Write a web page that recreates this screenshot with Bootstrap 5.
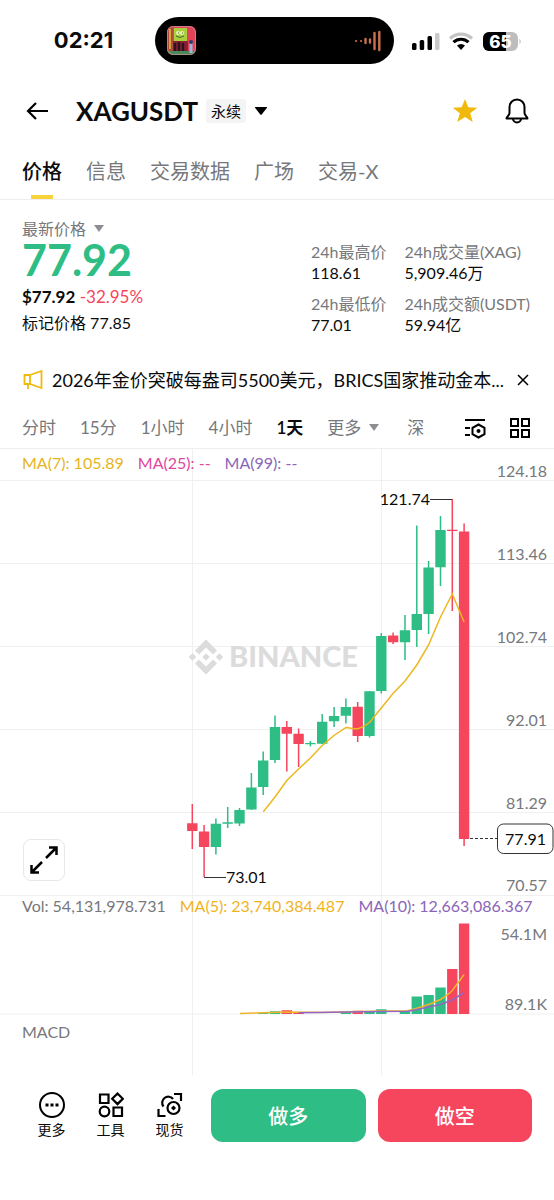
<!DOCTYPE html>
<html lang="zh-CN">
<head>
<meta charset="utf-8">
<meta name="viewport" content="width=device-width, initial-scale=1">
<title>XAGUSDT 永续</title>
<link href="https://cdn.jsdelivr.net/npm/bootstrap@5.3.0/dist/css/bootstrap.min.css" rel="stylesheet">
<style>
  :root { --up: #2ebd85; --down: #f6465d; --muted: #76787c; --gold: #f0b90b; --edge: 22px; }
  body { font-family: Lato, "Noto Sans CJK SC", sans-serif; font-size: 16px; line-height: 22px; color: #0b0b0c; background: #fff; }
  button { color: inherit; }
  .btn-bare { background: none; border: 0; padding: 0; display: flex; align-items: center; color: inherit; }
  svg { display: block; flex: none; }
  .edge { padding-left: var(--edge); padding-right: var(--edge); }
  .tone-muted { color: var(--muted); }
  .tone-up { color: var(--up); }
  .tone-down { color: var(--down); }

  .status-bar { display: grid; grid-template-columns: 155fr 239fr 160fr; height: 80px; padding-top: 17px; }
  .status-bar > * { height: 47px; }
  .clock { font: 700 22px/47px Inter, sans-serif; padding-left: 12px; }
  .island { background: #000; border-radius: 24px; padding: 0 12px; }
  .signals { padding-left: 18px; }

  .page-head { height: 62px; }
  .pair { font-size: 26px; line-height: 32px; font-weight: 700; margin: 0 8px 0 28px; }
  .kind { font-size: 15px; line-height: 24px; background: #f4f4f5; border-radius: 3px; padding: 0 5px; }

  .tabs { gap: 24px; height: 58px; border-bottom: 1px solid #eee; }
  .tabs a { position: relative; display: flex; align-items: center; font-size: 20px; color: var(--muted); text-decoration: none; }
  .tabs a.active { color: #0b0b0c; font-weight: 500; }
  .tabs a.active::after { content: ""; position: absolute; left: 9px; right: 9px; bottom: 0; height: 4px; background: #f8d33a; }

  .summary { padding-top: 18px; height: 152px; }
  .last-price { font-size: 43px; line-height: 40px; font-weight: 700; margin-bottom: 4px; }
  .sub-line { line-height: 26px; }
  .usd-line { font-size: 17px; }
  .stats { display: grid; grid-template-columns: auto auto; gap: 10px 18px; padding-top: 23px; line-height: 21px; }
  .stats dt, .stats dd { font-weight: 400; margin: 0; line-height: 21px; }
  .stats dl, .stats { padding-right: 2px; }

  .notice { height: 56px; font-size: 18px; gap: 8px; }
  .notice a { color: inherit; text-decoration: none; }
  .frames { gap: 24px; height: 41px; font-size: 17px; color: var(--muted); border-bottom: 1px solid #eee; }
  .frames .active { color: #0b0b0c; font-weight: 600; }

  .pane { position: relative; }
  .pane svg.plot { width: 100%; height: auto; }
  .legend-row { position: absolute; top: 0; left: var(--edge); right: 0; display: flex; gap: 14px; line-height: 20px; white-space: nowrap; }
  .legend-price { top: 4px; }
  .legend-macd { top: 7px; }
  .expand { position: absolute; left: 23px; bottom: 15px; width: 42px; height: 42px; justify-content: center; background: #fff; border: 1px solid #e8e8ea; border-radius: 8px; }
  .grid-line { stroke: #f0f0f1; stroke-width: 1; fill: none; }
  .wick { stroke-width: 1.5; fill: none; }
  .candle { stroke-width: 10.4; fill: none; }
  .g { stroke: var(--up); }
  .r { stroke: var(--down); }
  .axis { font-size: 16px; fill: var(--muted); text-anchor: end; }

  .action-bar { padding-top: 14px; padding-bottom: 58px; }
  .tool { width: 59px; flex-direction: column; gap: 2px; font-size: 14px; line-height: 20px; padding-top: 3px; }
  .trade { height: 53px; border: 0; border-radius: 12px; color: #fff; font-size: 20px; font-weight: 500; }
  .long { background: var(--up); }
  .short { background: var(--down); }
</style>
</head>
<body>

<div class="status-bar">
  <div class="clock text-center">02:21</div>
  <div class="island d-flex align-items-center justify-content-between">
    <svg width="29" height="29" viewBox="0 0 29 29">
      <defs><clipPath id="art"><rect width="29" height="29" rx="6"/></clipPath></defs>
      <g clip-path="url(#art)">
        <rect width="29" height="29" fill="#e0435a"/><rect width="6" height="26" fill="#b04a3c"/><path d="M3 3v20" stroke="#d8a03a" stroke-width="2"/>
        <rect x="7" y="2" width="13" height="13" fill="#a9cf3d"/><circle cx="11" cy="7" r="2" fill="#e6f2b0"/><circle cx="15" cy="7" r="2" fill="#e6f2b0"/><path d="M9 10q4 3 8 0M11 7h1M15 7h1" stroke="#3d6b2c" fill="none"/>
        <path d="M6 15h15v10H6z" fill="#8c1f33"/><path d="M8 17v8M12 16v9M16 17v8" stroke="#2b1420" stroke-width="2.5"/>
        <path d="M0 25h29v4H0z" fill="#4a8a58"/><path d="M24 15v12" stroke="#9fb6d8" stroke-width="3"/><circle cx="24" cy="16" r="2" fill="#333a66"/>
      </g>
      <rect x=".5" y=".5" width="28" height="28" rx="6" fill="none" stroke="#c9989c" stroke-opacity=".7"/>
    </svg>
    <svg width="28" height="22" viewBox="0 0 28 22" stroke="#c9714f" stroke-width="2.4" stroke-linecap="round"><path d="M2 11h.1M7 11h.1" stroke-width="2"/><path d="M11.500 9v4M16 9.500v3M20.500 3v16M25.300 2v18"/></svg>
  </div>
  <div class="signals d-flex align-items-center">
    <svg width="110" height="22" viewBox="0 0 110 22">
      <rect x="0" y="13" width="4.500" height="7" rx="1.500"/><rect x="7.700" y="10" width="4.500" height="10" rx="1.500"/><rect x="15.500" y="6" width="4.500" height="14" rx="1.500"/><rect x="23" y="3" width="4.500" height="17" rx="1.500" fill="#c9c9cb"/>
      <path d="M38 8.500a16 16 0 0 1 22 0" fill="none" stroke="#c4c4c6" stroke-width="3.200"/><path d="M41.500 12.200a11 11 0 0 1 15 0" fill="none" stroke="#000" stroke-width="3.200"/><path d="M45 15.500a6 6 0 0 1 8 0L49 20z"/>
      <rect x="71" y="2" width="35" height="19" rx="6" fill="#bdbdbf"/><path d="M77 2h17v19H77a6 6 0 0 1-6-6V8a6 6 0 0 1 6-6z"/><path d="M107.500 8.500v6q2.500-3 0-6z" fill="#bdbdbf"/>
      <text x="88.500" y="17.500" text-anchor="middle" font-family="Inter, sans-serif" font-weight="800" font-size="17" fill="#fff">65</text>
    </svg>
  </div>
</div>

<header class="page-head edge d-flex align-items-center">
  <button class="btn-bare ps-1" aria-label="返回"><svg width="22" height="20" viewBox="0 0 22 20" fill="none" stroke="#000" stroke-width="2.200"><path d="M22 10H2M10 2L2 10l8 8"/></svg></button>
  <h1 class="pair">XAGUSDT</h1>
  <span class="kind">永续</span>
  <button class="btn-bare ms-2" aria-label="切换合约"><svg width="14" height="10" viewBox="0 0 14 10"><path d="M1.500 1h11q1 0 .3 1L7.700 8.500q-.7.800-1.400 0L1.200 2q-.7-1 .3-1z"/></svg></button>
  <button class="btn-bare ms-auto" aria-label="收藏"><svg width="28" height="26" viewBox="0 0 28 26"><path d="M13 1l3.300 8.300 8.900.4-7 5.500 2.500 8.800-7.700-5-7.700 5 2.500-8.800-7-5.500 8.900-.4z" fill="#f0b90b"/></svg></button>
  <button class="btn-bare ms-4" aria-label="提醒"><svg width="28" height="28" viewBox="1 0 28 28" fill="none" stroke="#000" stroke-width="2"><path d="M14 2.500c-4.500 0-7.500 3.300-7.500 7.700V16c0 2-2.700 3.800-3 5.500h21c-.3-1.700-3-3.500-3-5.500v-5.800c0-4.400-3-7.700-7.500-7.700z" stroke-linejoin="round"/><path d="M10 21.500a4 4 0 0 0 8 0"/></svg></button>
</header>

<nav class="tabs edge d-flex">
  <a href="#" class="active">价格</a><a href="#">信息</a><a href="#">交易数据</a><a href="#">广场</a><a href="#">交易-X</a>
</nav>

<section class="summary edge d-flex justify-content-between">
  <div>
    <button class="btn-bare tone-muted gap-2">最新价格 <svg width="10" height="8" viewBox="0 0 10 8"><path d="M0 0h10L5 7z" fill="#8c8e92"/></svg></button>
    <div class="last-price tone-up">77.92</div>
    <div class="sub-line usd-line"><b>$77.92</b> <span class="tone-down">-32.95%</span></div>
    <div class="sub-line">标记价格 77.85</div>
  </div>
  <dl class="stats m-0 align-content-start">
    <div><dt class="tone-muted">24h最高价</dt><dd>118.61</dd></div>
    <div><dt class="tone-muted">24h成交量(XAG)</dt><dd>5,909.46万</dd></div>
    <div><dt class="tone-muted">24h最低价</dt><dd>77.01</dd></div>
    <div><dt class="tone-muted">24h成交额(USDT)</dt><dd>59.94亿</dd></div>
  </dl>
</section>

<div class="notice edge d-flex align-items-center">
  <svg width="22" height="22" viewBox="0 0 22 22" fill="none" stroke="#f0b90b" stroke-width="1.800"><path d="M8 6L19.500 2v17L8 15M8 6H2.500v9H8zM6 15v5"/></svg>
  <a href="#" class="text-truncate">2026年金价突破每盎司5500美元，BRICS国家推动金本...</a>
  <button class="btn-bare ms-auto" aria-label="关闭"><svg width="15" height="12" viewBox="0 0 15 12" stroke="#000" stroke-width="1.500"><path d="M1 1l10 10M11 1L1 11"/></svg></button>
</div>

<div class="frames edge d-flex align-items-center text-nowrap">
  <button class="btn-bare">分时</button><button class="btn-bare">15分</button><button class="btn-bare">1小时</button><button class="btn-bare">4小时</button><button class="btn-bare active">1天</button>
  <button class="btn-bare gap-2">更多 <svg width="10" height="8" viewBox="0 0 10 8"><path d="M0 0h10L5 7z" fill="#8c8e92"/></svg></button>
  <button class="btn-bare ms-1">深</button>
  <button class="btn-bare ms-auto" aria-label="指标设置"><svg width="22" height="22" viewBox="0 0 22 22" fill="none" stroke="#000" stroke-width="2"><path d="M1 3h20M1 11h5M1 18h5"/><path d="M14.500 7.500l6 3.300v6.400l-6 3.300-6-3.300v-6.400z"/><circle cx="14.500" cy="14" r="2" fill="#000" stroke="none"/></svg></button>
  <button class="btn-bare" aria-label="布局"><svg width="22" height="22" viewBox="1 0 22 22" fill="none" stroke="#000" stroke-width="2"><path d="M2 2h7v7H2zM13 2h7v7h-7zM2 13h7v7H2zM13 13h7v7h-7z"/></svg></button>
</div>

<main>
  <div class="pane">
    <svg class="plot" viewBox="0 449 554 447">
      <path class="grid-line" d="M0 480.500H554M0 563.500H554M0 646.500H554M0 729.500H554M0 812.500H554M0 895.500H554M192.500 449V896M381.500 449V896"/>
      <g fill="#dcdcdd">
        <path d="M206 639.500l11 11-4 4-7-7-7 7-4-4zM206 674.500l11-11-4-4-7 7-7-7-4 4zM206 653.300l3.700 3.700-3.700 3.700-3.700-3.700zM192.500 653.300l3.700 3.700-3.700 3.700-3.700-3.700zM219.500 653.300l3.700 3.700-3.700 3.700-3.700-3.700z"/>
        <text x="229" y="667" font-size="29" font-weight="900">BINANCE</text>
      </g>
      <path class="wick r" d="M192.300 804V849M204.100 825V877M286.800 721V771.500M298.600 728.500V767M357.700 702V742M393.100 632.500V644M452.300 499V611M464.100 523.500V846"/>
      <path class="wick g" d="M215.900 818.500V854.500M227.700 807V828M239.500 808V826M251.400 773V810M263.200 751.500V795M275 715.500V763M310.400 741V746.500M322.200 714V744M334.100 707V727M345.900 698.500V723.500M369.500 691V737.500M381.300 633V693.500M405 615V660M416.800 525.500V647M428.600 561V634M440.500 516V586"/>
      <path class="candle r" d="M192.300 823.300V831M204.100 831.500V847M286.800 727V733.700M298.600 733.700V744M357.700 706.700V736M393.100 635.500V642.300M452.300 529.700V531M464.100 531.500V839"/>
      <path class="candle g" d="M215.900 823.700V847M227.700 822.300V823.700M239.500 810V823.500M251.400 787.500V809.500M263.200 760.500V787M275 727V760M310.400 743V744.300M322.200 721.700V743.700M334.100 716V721.300M345.900 707V715.700M369.500 691.300V736M381.300 636V691M405 630.300V642.300M416.800 614V630M428.600 567.500V614M440.500 530V567.300"/>
      <path d="M263.300 811.700L275 797L286.800 780.500L298.600 769L310.400 758L322.200 745.500L334 735.500L346 727.500C350 727.500 354 729.500 357.700 728.700C362 727.500 366 725.500 369.500 722.500L381.300 708L393 693.500L405 681L416.800 665L428.600 645L440.500 617L452.300 594L464.100 622" fill="none" stroke="#edb71f" stroke-width="1.500"/>
      <path d="M430 499.500H452M204 877.500H226" stroke="#333" fill="none"/>
      <path d="M470 838.500H497" stroke="#333" stroke-dasharray="3 2"/>
      <text x="430" y="505" text-anchor="end" font-size="16" fill="#0b0b0c">121.74</text>
      <text x="226" y="883" font-size="16" fill="#0b0b0c">73.01</text>
      <g class="axis"><text x="547" y="477">124.18</text><text x="547" y="560">113.46</text><text x="547" y="643">102.74</text><text x="547" y="726">92.01</text><text x="547" y="809">81.29</text><text x="547" y="891">70.57</text></g>
      <rect x="497.500" y="824" width="55.500" height="29.500" rx="6" fill="#fff" stroke="#333"/>
      <text x="546" y="845" text-anchor="end" font-size="16" fill="#0b0b0c">77.91</text>
    </svg>
    <div class="legend-row legend-price"><span style="color:#e6b422">MA(7): 105.89</span><span style="color:#e0479e">MA(25): --</span><span style="color:#8a65b8">MA(99): --</span></div>
    <button class="btn-bare expand" aria-label="全屏"><svg width="28" height="28" viewBox="0 0 28 28" fill="none" stroke="#000" stroke-width="2.500"><path d="M16 12L26.500 1.500M19 1.500h7.500V9M12 16L1.500 26.500M1.500 19v7.500H9"/></svg></button>
  </div>

  <div class="pane">
    <svg class="plot" viewBox="0 896 554 119">
      <path class="grid-line" d="M0 1014H554M192.500 896V1015M381.500 896V1015"/>
      <path class="candle r" d="M286.800 1010.300V1014M298.600 1012.300V1014M357.700 1010.700V1014M452.300 969V1014M464.100 923.500V1014"/>
      <path class="candle g" d="M263.200 1013V1014M275 1011.300V1014M345.900 1012.300V1014M369.500 1012V1014M381.300 1009.300V1014M405 1011.500V1014M416.800 996.500V1014M428.600 995V1014M440.500 987.500V1014"/>
      <path d="M240 1013.500L287 1012L322 1012.500L381 1011L405 1011C410 1011 429 1005 440.500 999.500C446 996 450 993 452.300 990.500L464.100 974.500" fill="none" stroke="#f0b42c" stroke-width="1.500"/>
      <path d="M298.600 1012.700L381 1011.500L408 1011.300L417 1009.500L428.600 1007L440.500 1004.500L452.300 1000L464.100 992.500" fill="none" stroke="#9466c4" stroke-width="1.500"/>
      <g class="axis"><text x="547" y="940">54.1M</text><text x="547" y="1010">89.1K</text></g>
    </svg>
    <div class="legend-row"><span class="tone-muted">Vol: 54,131,978.731</span><span style="color:#f0b422">MA(5): 23,740,384.487</span><span style="color:#8a65b8">MA(10): 12,663,086.367</span></div>
  </div>

  <div class="pane">
    <svg class="plot" viewBox="0 1015 554 60"><path class="grid-line" d="M192.500 1015V1075M381.500 1015V1075"/></svg>
    <div class="legend-row legend-macd tone-muted">MACD</div>
  </div>
</main>

<footer class="action-bar edge d-flex">
  <button class="btn-bare tool"><svg width="26" height="26" viewBox="0 0 26 26" fill="none" stroke="#000" stroke-width="2"><circle cx="13" cy="13" r="12"/><path d="M6.500 13h3M11.500 13h3M16.500 13h3" stroke-width="3"/></svg>更多</button>
  <button class="btn-bare tool"><svg width="26" height="26" viewBox="0 0 26 26" fill="none" stroke="#000" stroke-width="2.200"><path d="M2 2.500h8.500V11H2zM15.500 15.500H24V24h-8.500zM19.500 1.500l5.300 5.300-5.300 5.300-5.300-5.300z"/><circle cx="6.500" cy="19.500" r="4.800"/></svg>工具</button>
  <button class="btn-bare tool"><svg width="26" height="26" viewBox="0 0 26 26" fill="none" stroke="#000" stroke-width="2.200"><path d="M17 2h7v7M1.500 17v7h7M6.500 14.500a6 6 0 1 1 9.500-7.500"/><circle cx="16.500" cy="16" r="6"/><path d="M16.500 13.500l2.500 2.500-2.500 2.500-2.500-2.500z" fill="#000" stroke="none"/></svg>现货</button>
  <div class="row flex-grow-1 g-0 ms-2 ps-1">
    <div class="col pe-1 me-1"><button class="trade long w-100">做多</button></div>
    <div class="col ps-1"><button class="trade short w-100">做空</button></div>
  </div>
</footer>

<script src="https://cdn.jsdelivr.net/npm/bootstrap@5.3.0/dist/js/bootstrap.bundle.min.js"></script>
</body>
</html>
